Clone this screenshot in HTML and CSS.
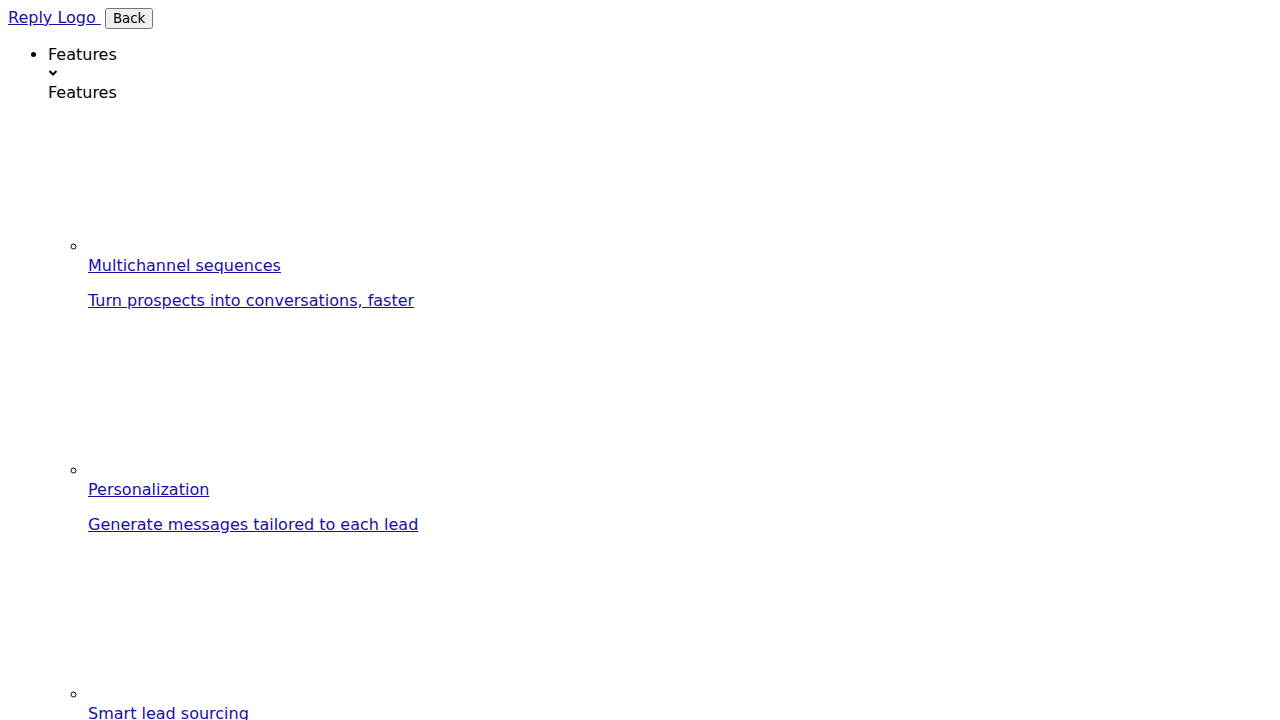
FILE: index.html
```html
<!DOCTYPE html>
<html lang="en">
<head>
<meta charset="utf-8">
<title>Reply</title>
<link rel="stylesheet" href="styles.css">
</head>
<body class="page">
<header class="topbar"><a class="logo" href="#">Reply Logo <span class="logo-img"></span></a> <button class="back" type="button">Back</button></header>
<ul class="menu">
  <li class="menu-item">
    <div class="menu-label">Features</div>
    <div class="menu-toggle"><svg class="chevron" width="16" height="16" viewBox="0 0 16 16" aria-hidden="true"><path d="M1.5 7 L5 10.5 L8.5 7" fill="none" stroke="#000" stroke-width="2"/></svg></div>
    <div class="menu-label">Features</div>
    <ul class="submenu">
      <li class="sub-item"><a class="sub-link" href="#"><span class="sub-pic"></span><div class="sub-title">Multichannel sequences</div><p class="sub-desc">Turn prospects into conversations, faster</p></a></li>
      <li class="sub-item"><a class="sub-link" href="#"><span class="sub-pic"></span><div class="sub-title">Personalization</div><p class="sub-desc">Generate messages tailored to each lead</p></a></li>
      <li class="sub-item"><a class="sub-link" href="#"><span class="sub-pic"></span><div class="sub-title">Smart lead sourcing</div><p class="sub-desc">Find the right prospects in seconds</p></a></li>
    </ul>
  </li>
</ul>
</body>
</html>
```
FILE: styles.css
```css
.page {
  margin: 8px;
  font-family: "DejaVu Sans", sans-serif;
  font-size: 16px;
  color: #000;
}
.logo { color: #1a0dab; }
.logo-img { display: inline-block; width: 0; }
.back {
  font-family: "DejaVu Sans", sans-serif;
  font-size: 13.333px;
  margin-left: -1px;
}
.menu { margin: 16px 0; padding-left: 40px; }
.menu-toggle { height: 19px; }
.chevron { display: block; }
.submenu { margin: 0; padding-left: 40px; list-style-type: circle; }
.sub-link { color: #1a0dab; }
.sub-pic { display: inline-block; width: 0; height: 150px; }
.sub-desc { margin: 16px 0; }
```
